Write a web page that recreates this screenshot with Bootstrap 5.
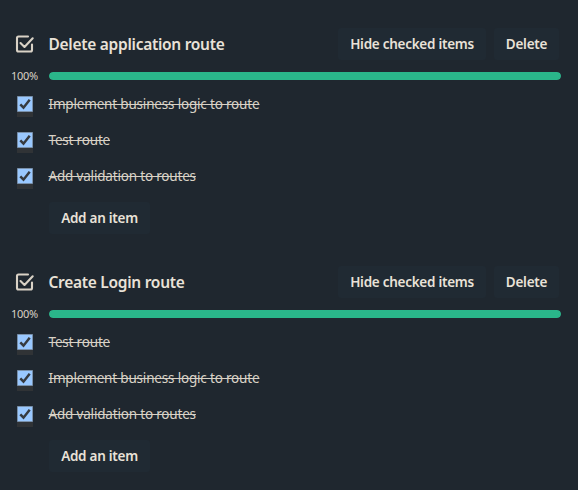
<!DOCTYPE html>
<html lang="en">
<head>
<meta charset="utf-8">
<meta name="viewport" content="width=device-width, initial-scale=1">
<title>Checklists</title>
<link href="https://cdn.jsdelivr.net/npm/bootstrap@5.3.0/dist/css/bootstrap.min.css" rel="stylesheet">
<style>
body{background:#1f272f;color:#d9d2c6;font-family:"Segoe UI","Noto Sans","Open Sans",sans-serif;font-size:13.5px;line-height:20px;overflow:hidden}
.checklist{height:238px;padding:28px 19px 0 0}
.gutter{width:49px;flex:none}
.head{height:32px}
.head svg{display:block;margin-left:12px}
.title{font-size:15.5px;font-weight:600;line-height:20px;color:#e9e2d8;letter-spacing:-.28px;margin-left:-.5px!important}
.tool{height:32px;width:65px;padding:0;border:0;border-radius:3px;background:#202a33;color:#e9e2d8;font-size:13.5px;font-weight:600;line-height:32px;letter-spacing:-.27px;white-space:nowrap}
.tool:hover{background:#2a3640;color:#fff}
.tool.hide{width:148px}
.meter{height:8px;margin:12px 0 6px;margin-right:-2px}
.percent{font-size:11px;padding-left:11px;letter-spacing:-.3px}
.progress.track{height:8px;border-radius:4px;background:#2c3640}
.track .progress-bar{background:#2ab68a;border-radius:4px}
.item{height:36px}
.item-text{letter-spacing:-.18px;margin-left:-.5px}
.tick{display:block;width:16px;height:21px;margin:5px 0 0 17px}
.tool.add{width:101px;margin:8px 0 0 49px}
</style>
<script src="https://cdn.jsdelivr.net/npm/bootstrap@5.3.0/dist/js/bootstrap.bundle.min.js"></script>
</head>
<body>
<svg class="d-none">
<symbol id="i-list" viewBox="0 0 24 24"><path fill="none" stroke="#d9d2c6" stroke-width="2.100" stroke-linecap="round" stroke-linejoin="round" d="M16 4.500H6.500Q5 4.500 5 6v12q0 1.500 1.500 1.500h12q1.500 0 1.500-1.500v-5.500M8.500 11l4 4L20.700 6.300"/></symbol>
<symbol id="i-tick" viewBox="0 0 16 21"><path fill="#303336" d="M0 16h16v5H0z"/><path fill="#99c8ff" stroke="#7990aa" d="M.5.5h15v15H.5z"/><path fill="none" stroke="#363a3f" stroke-width="2.500" d="M3.300 8.300l3.200 3.400L12.700 3.700"/></symbol>
</svg>
<main>
<section class="checklist">
<div class="head d-flex align-items-center"><div class="gutter"><svg width="24" height="24"><use href="#i-list"/></svg></div><h3 class="title m-0 flex-grow-1">Delete application route</h3><div class="d-flex gap-2"><button class="btn tool hide">Hide checked items</button><button class="btn tool">Delete</button></div></div>
<div class="meter d-flex align-items-center"><span class="gutter percent">100%</span><div class="progress track flex-grow-1"><div class="progress-bar w-100"></div></div></div>
<div class="item d-flex align-items-center"><div class="gutter"><svg class="tick"><use href="#i-tick"/></svg></div><s class="item-text">Implement business logic to route</s></div>
<div class="item d-flex align-items-center"><div class="gutter"><svg class="tick"><use href="#i-tick"/></svg></div><s class="item-text">Test route</s></div>
<div class="item d-flex align-items-center"><div class="gutter"><svg class="tick"><use href="#i-tick"/></svg></div><s class="item-text">Add validation to routes</s></div>
<button class="btn tool add">Add an item</button>
</section>
<section class="checklist">
<div class="head d-flex align-items-center"><div class="gutter"><svg width="24" height="24"><use href="#i-list"/></svg></div><h3 class="title m-0 flex-grow-1">Create Login route</h3><div class="d-flex gap-2"><button class="btn tool hide">Hide checked items</button><button class="btn tool">Delete</button></div></div>
<div class="meter d-flex align-items-center"><span class="gutter percent">100%</span><div class="progress track flex-grow-1"><div class="progress-bar w-100"></div></div></div>
<div class="item d-flex align-items-center"><div class="gutter"><svg class="tick"><use href="#i-tick"/></svg></div><s class="item-text">Test route</s></div>
<div class="item d-flex align-items-center"><div class="gutter"><svg class="tick"><use href="#i-tick"/></svg></div><s class="item-text">Implement business logic to route</s></div>
<div class="item d-flex align-items-center"><div class="gutter"><svg class="tick"><use href="#i-tick"/></svg></div><s class="item-text">Add validation to routes</s></div>
<button class="btn tool add">Add an item</button>
</section>
</main>
</body>
</html>
